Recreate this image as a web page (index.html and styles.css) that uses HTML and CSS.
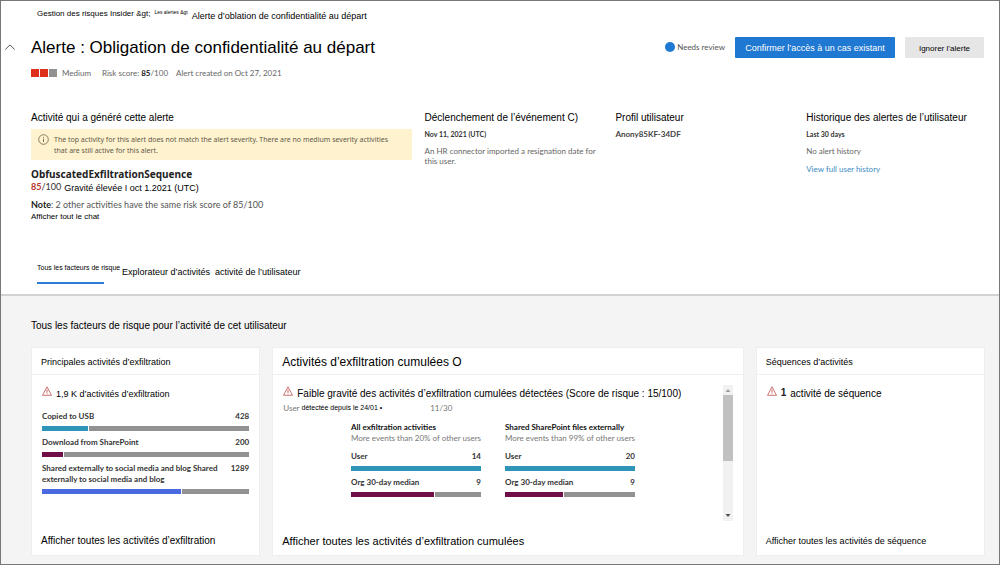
FILE: index.html
```
<!DOCTYPE html>
<html lang="fr">
<head>
<meta charset="utf-8">
<meta name="viewport" content="width=device-width, initial-scale=1">
<title>Alerte : Obligation de confidentialité au départ</title>
<link rel="stylesheet" href="styles.css">
</head>
<body>
<svg class="defs" aria-hidden="true">
  <symbol id="warning" viewBox="0 0 10 10">
    <path d="M5 .8 9.5 9.3H.5Z" fill="none" stroke="currentColor" stroke-width=".8" stroke-linejoin="round"/>
    <path d="M5 3.6V6.7M5 7.4V8.2" stroke="currentColor" stroke-width=".9"/>
  </symbol>
</svg>
<div class="page">
  <header class="top">
    <nav class="crumbs" aria-label="Fil d'Ariane">
      <a href="#" class="crumb">Gestion des risques Insider &amp;gt;</a>
      <a href="#" class="crumb crumb-tiny">Les alertes &amp;gt</a>
      <span class="crumb-current">Alerte d’oblation de confidentialité au départ</span>
    </nav>
    <div class="title-row">
      <button class="collapse" aria-label="Réduire"><svg viewBox="0 0 10 6"><path d="M.4 5.4 5 .9 9.6 5.4" fill="none" stroke="#555" stroke-width="1"/></svg></button>
      <h1 class="title">Alerte : Obligation de confidentialité au départ</h1>
      <span class="status"><span class="status-dot"></span>Needs review</span>
      <button class="btn btn-primary">Confirmer l’accès à un cas existant</button>
      <button class="btn btn-plain">Ignorer l’alerte</button>
    </div>
    <div class="meta">
      <span class="severity"><i class="sq sq-on"></i><i class="sq sq-on"></i><i class="sq"></i></span>
      <span class="level">Medium</span>
      <span class="score">Risk score: <b>85</b>/100</span>
      <span>Alert created on Oct 27, 2021</span>
    </div>
    <div class="info">
      <section class="info-col">
        <h2 class="heading">Activité qui a généré cette alerte</h2>
        <div class="banner">
          <svg class="banner-icon" viewBox="0 0 11 11"><circle cx="5.500" cy="5.500" r="4.800" fill="none" stroke="#6a6248" stroke-width=".8"/><path d="M5.500 4.700V8M5.500 2.900V3.800" stroke="#6a6248" stroke-width=".9"/></svg>
          <p>The top activity for this alert does not match the alert severity. There are no medium severity activities that are still active for this alert.</p>
        </div>
        <h3 class="sequence">ObfuscatedExfiltrationSequence</h3>
        <p class="risk"><span class="risk-score"><b>85</b>/100</span><span class="risk-text">Gravité élevée I oct 1.2021 (UTC)</span></p>
        <p class="note"><b>Note</b>: 2 other activities have the same risk score of 85/100</p>
        <a href="#" class="chat">Afficher tout le chat</a>
      </section>
      <section class="info-col">
        <h2 class="heading">Déclenchement de l’événement C)</h2>
        <p class="strong-line">Nov 11, 2021 (UTC)</p>
        <p class="copy">An HR connector imported a resignation date for this user.</p>
      </section>
      <section class="info-col">
        <h2 class="heading">Profil utilisateur</h2>
        <p class="user-id">Anony85KF-34DF</p>
      </section>
      <section class="info-col">
        <h2 class="heading">Historique des alertes de l’utilisateur</h2>
        <p class="strong-line">Last 30 days</p>
        <p class="copy">No alert history</p>
        <a href="#" class="history">View full user history</a>
      </section>
    </div>
    <nav class="tabs" aria-label="Vues">
      <a href="#" class="tab tab-active">Tous les facteurs de risque</a>
      <a href="#" class="tab">Explorateur d’activités</a>
      <a href="#" class="tab">activité de l’utilisateur</a>
    </nav>
  </header>
  <main class="main">
    <h2 class="main-title">Tous les facteurs de risque pour l’activité de cet utilisateur</h2>
    <div class="cards">
      <section class="card">
        <h3 class="card-head">Principales activités d’exfiltration</h3>
        <div class="card-body">
          <p class="lead lead-small"><svg class="warn"><use href="#warning"/></svg><span>1,9 K d’activités d’exfiltration</span></p>
          <div class="bars">
            <div class="bar-item"><p class="bar-label"><span>Copied to USB</span><span>428</span></p><div class="bar"><span class="fill teal" style="width:22%"></span></div></div>
            <div class="bar-item"><p class="bar-label"><span>Download from SharePoint</span><span>200</span></p><div class="bar"><span class="fill plum" style="width:10%"></span></div></div>
            <div class="bar-item"><p class="bar-label"><span>Shared externally to social media and blog Shared externally to social media and blog</span><span>1289</span></p><div class="bar"><span class="fill blue" style="width:67%"></span></div></div>
          </div>
        </div>
        <a href="#" class="card-link">Afficher toutes les activités d’exfiltration</a>
      </section>
      <section class="card card-wide">
        <h3 class="card-head">Activités d’exfiltration cumulées O</h3>
        <div class="card-body scroller">
          <div class="scroll-content">
            <p class="lead"><svg class="warn"><use href="#warning"/></svg><span>Faible gravité des activités d’exfiltration cumulées détectées (Score de risque : 15/100)</span></p>
            <p class="since"><span>User</span><span class="since-text">détectée depuis le 24/01 •</span><span class="since-date">11/30</span></p>
            <div class="compare">
              <div class="compare-col">
                <h4 class="compare-title">All exfiltration activities</h4>
                <p class="compare-sub">More events than 20% of other users</p>
                <div class="bar-item"><p class="bar-label"><span>User</span><span>14</span></p><div class="bar"><span class="fill teal full" style="width:100%"></span></div></div>
                <div class="bar-item"><p class="bar-label"><span>Org 30-day median</span><span>9</span></p><div class="bar"><span class="fill plum" style="width:64%"></span></div></div>
              </div>
              <div class="compare-col">
                <h4 class="compare-title">Shared SharePoint files externally</h4>
                <p class="compare-sub">More events than 99% of other users</p>
                <div class="bar-item"><p class="bar-label"><span>User</span><span>20</span></p><div class="bar"><span class="fill teal full" style="width:100%"></span></div></div>
                <div class="bar-item"><p class="bar-label"><span>Org 30-day median</span><span>9</span></p><div class="bar"><span class="fill plum" style="width:45%"></span></div></div>
              </div>
            </div>
          </div>
          <div class="scrollbar" aria-hidden="true">
            <svg class="arrow" viewBox="0 0 10 10"><path d="M5 4 7.500 7h-5Z" fill="#a0a0a0"/></svg>
            <span class="thumb"></span>
            <svg class="arrow" viewBox="0 0 10 10"><path d="M2.500 3h5L5 6Z" fill="#505050"/></svg>
          </div>
        </div>
        <a href="#" class="card-link">Afficher toutes les activités d’exfiltration cumulées</a>
      </section>
      <section class="card card-seq">
        <h3 class="card-head">Séquences d’activités</h3>
        <div class="card-body">
          <p class="lead"><svg class="warn"><use href="#warning"/></svg><b class="count">1</b><span>activité de séquence</span></p>
        </div>
        <a href="#" class="card-link">Afficher toutes les activités de séquence</a>
      </section>
    </div>
  </main>
</div>
</body>
</html>
```
FILE: styles.css
```
:root { --ui: Lato, "Open Sans", sans-serif; --ui-wide: "Noto Sans", "Open Sans", sans-serif; }
* { box-sizing: border-box; }
body {
  margin: 0;
  background: #f4f4f4;
  color: #000;
  font-family: "Liberation Sans", Arial, sans-serif;
}
h1, h2, h3, h4, p { margin: 0; font-weight: 400; }
a { color: inherit; text-decoration: none; }
button { font-family: inherit; cursor: pointer; }
.defs { display: none; }
.page {
  min-height: 100vh;
  border: 1px solid #777;
  display: flex;
  flex-direction: column;
}
.top {
  background: #fff;
  padding: 6px 15px 0 30px;
  border-bottom: 2px solid #d2d2d2;
}
.crumbs {
  display: flex;
  align-items: flex-start;
  gap: 4px;
  height: 18px;
  padding-left: 6px;
}
.crumb { font-size: 8px; line-height: 13px; }
.crumb-tiny { font-size: 5px; line-height: 11px; }
.crumb-current { font-size: 9px; line-height: 18px; }

.title-row {
  display: flex;
  align-items: center;
  margin: 10px 0 0 -26px;
}
.collapse { width: 10px; height: 20px; padding: 0; border: 0; background: none; }
.collapse svg { display: block; width: 10px; height: 6px; }
.title { flex: 1; margin-left: 16px; padding-top: 2px; font-size: 17px; line-height: 22px; }
.status {
  display: flex;
  align-items: center;
  gap: 2px;
  margin-right: 10px;
  color: #555;
  font: 8px/12px var(--ui);
}
.status-dot { width: 10px; height: 10px; border-radius: 50%; background: #1f78d1; }
.btn { height: 21px; border: 0; border-radius: 1px; padding: 2px 0 0; }
.btn-primary { width: 160px; background: #1f78d1; color: #fff; font-size: 9px; }
.btn-plain { width: 79px; margin-left: 10px; background: #e6e6e6; color: #000; font-size: 8px; }

.meta {
  display: flex;
  align-items: center;
  margin-top: 8px;
  color: #666;
  font: 8px/12px var(--ui);
}
.severity { display: flex; gap: 1px; }
.sq { width: 8px; height: 8px; background: #929292; }
.sq-on { background: #dc2f1c; }
.level { margin-left: 5px; }
.score { margin: 0 8px 0 11px; }
.score b { color: #222; }

.info {
  display: grid;
  grid-template-columns: 381fr 178fr 178fr 178fr;
  column-gap: 13px;
  margin-top: 31px;
}
.heading { font-size: 10px; line-height: 16px; white-space: nowrap; }
.banner {
  display: flex;
  gap: 5px;
  margin-top: 3px;
  padding: 5px 16px 4px 7px;
  background: #fff2cf;
  color: #5f5a4a;
  font: 7px/11px var(--ui-wide);
}
.banner-icon { flex: none; width: 11px; height: 11px; }
.sequence { margin-top: 7px; color: #222; font: 700 10px/14px var(--ui-wide); }
.risk { display: flex; gap: 3px; line-height: 14px; }
.risk-score { color: #333; font: 9px/12px var(--ui); }
.risk-score b { color: #b5352c; }
.risk-text { font-size: 9px; line-height: 14px; }
.note { margin-top: 4px; color: #555; font: 9px/12px var(--ui); }
.note b { color: #222; }
.chat { display: block; font-size: 8px; line-height: 12px; }
.strong-line { margin-top: 3px; color: #333; font: 700 7px/10px var(--ui); }
.user-id { margin-top: 2px; color: #444; font: 700 8px/12px var(--ui); }
.copy { margin-top: 7px; color: #666; font: 8px/10px var(--ui); }
.history { display: block; margin-top: 8px; color: #3b8bc4; font: 8px/10px var(--ui); }

.tabs {
  display: flex;
  gap: 5px;
  height: 32px;
  margin-top: 39px;
  padding-left: 6px;
}
.tab { font-size: 9px; line-height: 20px; white-space: nowrap; }
.tab-active { width: 80px; font-size: 7px; line-height: 12px; }
.tab-active::after { content: ""; display: block; width: 67px; height: 2px; margin-top: 8px; background: #2b7cd3; }

.main { flex: 1; display: flex; flex-direction: column; padding: 22px 14px 8px 30px; }
.main-title { font-size: 10px; line-height: 16px; }
.cards {
  flex: 1;
  display: grid;
  grid-template-columns: 229fr 471fr 229fr;
  gap: 12px;
  margin-top: 13px;
}
.card {
  display: flex;
  flex-direction: column;
  background: #fff;
  border: 1px solid #eee;
}
.card-head {
  padding: 2px 9px 0;
  border-bottom: 1px solid #f0f0f0;
  font-size: 9px;
  line-height: 24px;
}
.card-wide .card-head { font-size: 12px; }
.card-body { flex: 1; padding: 10px 10px 0; }
.card-link { padding: 0 9px 6px; font-size: 10px; line-height: 16px; }
.card-wide .card-link { font-size: 11px; }
.card-seq .card-link { font-size: 9px; }
.lead { display: flex; gap: 4px; font-size: 10px; line-height: 18px; white-space: nowrap; }
.lead-small { font-size: 9px; }
.warn { flex: none; width: 10px; height: 10px; margin-top: 1px; color: #c0504d; }
.count { font-size: 10px; line-height: 16px; color: #222; }
.bars { margin-top: 8px; }
.bar-label {
  display: flex;
  justify-content: space-between;
  gap: 6px;
  color: #333;
  font: 700 8px/11px var(--ui);
}
.bar-item { margin-bottom: 6px; }
.bar { height: 5px; margin-top: 4px; background: #929292; }
.fill { display: block; height: 5px; border-right: 1px solid #fff; box-sizing: content-box; }
.full { border-right: 0; }
.teal { background: #2f95b8; }
.plum { background: #700f47; }
.blue { background: #4a68e0; }
.scroller { display: flex; }
.scroll-content { flex: 1; min-width: 0; }
.since { display: flex; gap: 2px; color: #777; font: 8px/10px var(--ui); }
.since-text { color: #000; font-size: 7px; font-family: "Liberation Sans", Arial, sans-serif; }
.since-date { margin-left: 46px; }
.compare {
  display: grid;
  grid-template-columns: 130px 130px;
  justify-content: center;
  column-gap: 24px;
  margin-top: 9px;
  padding-right: 20px;
}
.compare-title { color: #111; font: 700 8px/11px var(--ui); white-space: nowrap; }
.compare-sub { margin-bottom: 7px; color: #777; font: 8px/11px var(--ui); white-space: nowrap; }
.scrollbar { display: flex; flex-direction: column; width: 10px; height: 136px; background: #f1f1f1; }
.arrow { width: 10px; height: 10px; }
.thumb { width: 10px; height: 66px; margin-bottom: auto; background: #c1c1c1; }
```
